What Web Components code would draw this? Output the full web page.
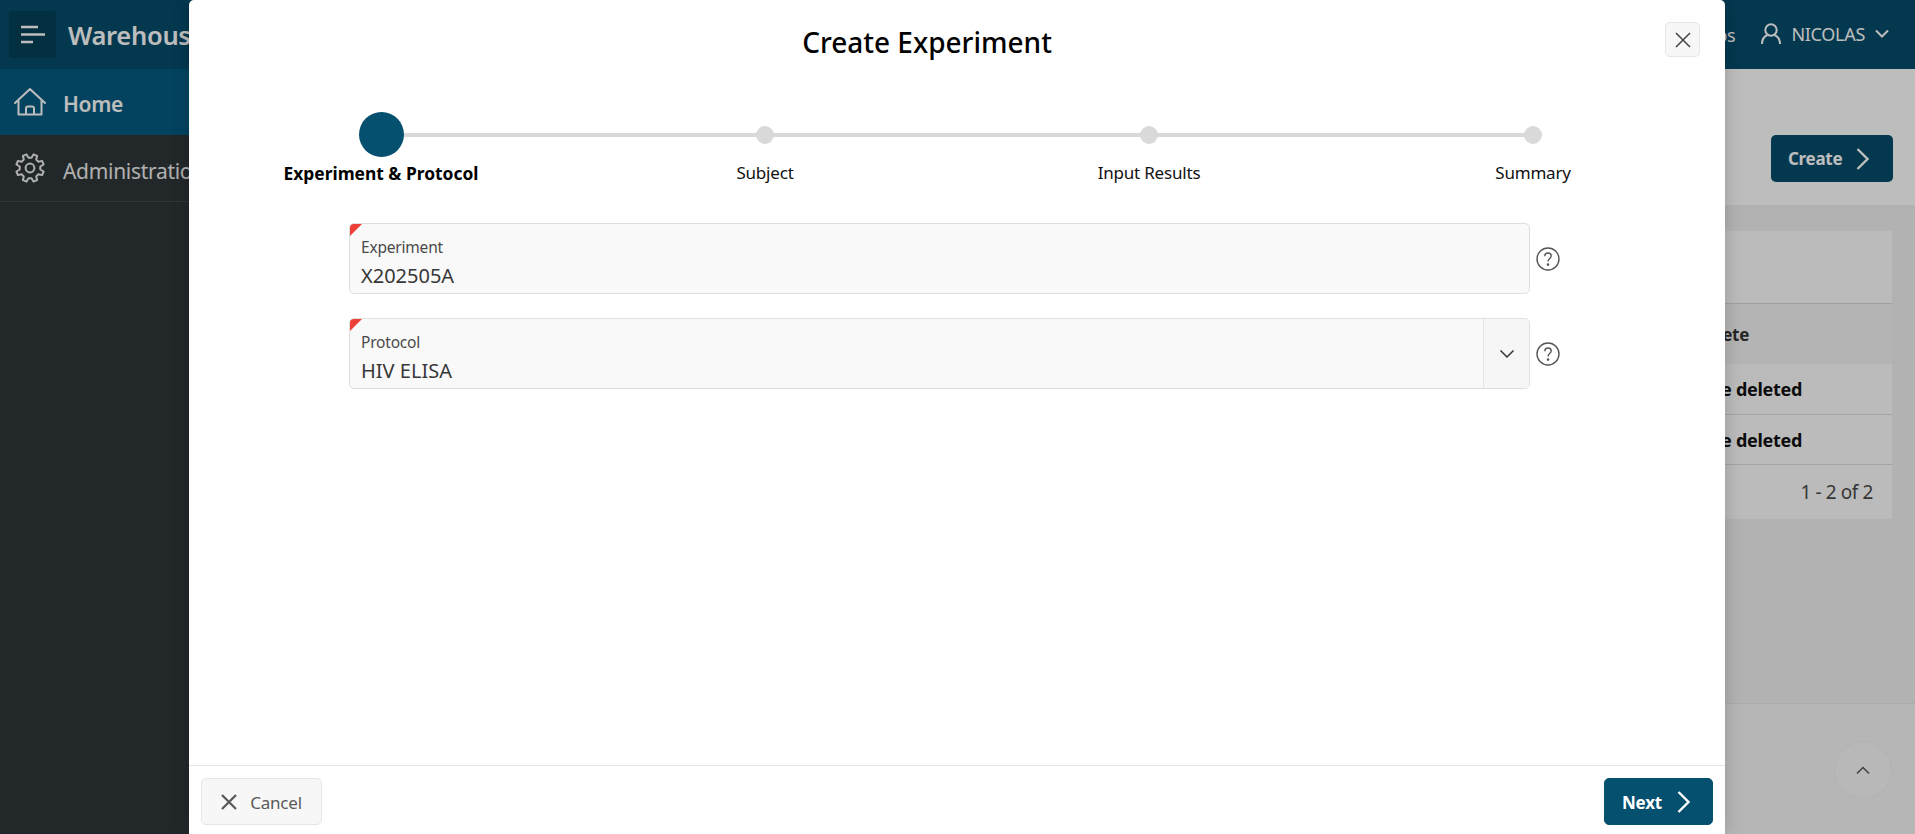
<!DOCTYPE html>
<html lang="en"><head><meta charset="utf-8"><title>Create Experiment</title>
<style>
html,body{margin:0;height:100%;overflow:hidden}
body{font-family:"Noto Sans","Open Sans",sans-serif;background:#fafafa}
</style></head><body>
<app-shell></app-shell>
<modal-scrim></modal-scrim>
<experiment-dialog></experiment-dialog>
<script>
function gearPath(){let d='';const n=8,cx=16,cy=15;const ro=14,ri=10.4;for(let i=0;i<n;i++){const a=(i/n)*Math.PI*2+Math.PI/8;const s=Math.PI/n;const pts=[[ri,a-s*.62],[ro,a-s*.36],[ro,a+s*.36],[ri,a+s*.62]];pts.forEach(([r,t],j)=>{d+=(i===0&&j===0?'M':'L')+(cx+r*Math.cos(t)).toFixed(1)+' '+(cy+r*Math.sin(t)).toFixed(1);});}return d+'Z';}
const I={
menu:'<svg width="26" height="20" viewBox="0 0 26 20" fill="none" stroke="currentColor" stroke-width="2.6"><path d="M1 2h17M1 9.500h24M1 17h12"/></svg>',
home:'<svg width="32" height="30" viewBox="0 0 32 30" fill="none" stroke="currentColor" stroke-width="2" stroke-linejoin="round" stroke-linecap="round"><path d="M1 16 16 2l15 14M4.500 13.500V27.500h23V13.500M12 27.500V21.500a2 2 0 0 1 2-2h4a2 2 0 0 1 2 2V27.500"/></svg>',
gear:'<svg width="32" height="30" viewBox="0 0 32 30" fill="none" stroke="currentColor" stroke-width="2" stroke-linejoin="round"><path d="'+gearPath()+'"/><circle cx="16" cy="15" r="4.400"/></svg>',
user:'<svg width="20" height="22" viewBox="0 0 20 22" fill="none" stroke="currentColor" stroke-width="2"><circle cx="10" cy="7" r="5.700"/><path d="M1 21c0-5 3-8 5.500-9M19 21c0-5-3-8-5.500-9"/></svg>',
down:'<svg width="14" height="9" viewBox="0 0 14 9" fill="none" stroke="currentColor" stroke-width="2"><path d="M1 1.500l6 6 6-6"/></svg>',
down2:'<svg width="16" height="10" viewBox="0 0 16 10" fill="none" stroke="currentColor" stroke-width="1.500"><path d="M1.500 1.500l6.500 6.500 6.500-6.500"/></svg>',
up:'<svg width="14" height="9" viewBox="0 0 14 9" fill="none" stroke="currentColor" stroke-width="1.500"><path d="M1 7.500l6-6 6 6"/></svg>',
right:'<svg width="13" height="22" viewBox="0 0 13 22" fill="none" stroke="currentColor" stroke-width="2.400"><path d="M1.500 1l10 10-10 10"/></svg>',
x:'<svg width="16" height="16" viewBox="0 0 16 16" fill="none" stroke="currentColor" stroke-width="1.500"><path d="M1 1l14 14M15 1L1 15"/></svg>',
xb:'<svg width="16" height="16" viewBox="0 0 16 16" fill="none" stroke="currentColor" stroke-width="2.300"><path d="M1 1l14 14M15 1L1 15"/></svg>',
help:'<svg width="24" height="24" viewBox="0 0 24 24" fill="none" stroke="currentColor" stroke-width="1.400"><circle cx="12" cy="12" r="11"/><path d="M8.800 9.200c0-2 1.400-3.200 3.200-3.200s3.200 1.200 3.200 3c0 2.600-3.200 2.600-3.200 5.400"/><circle cx="12" cy="17.600" r=".6" fill="currentColor"/></svg>'
};
function def(name,css,html){customElements.define(name,class extends HTMLElement{constructor(){super();const r=this.attachShadow({mode:'open'});r.innerHTML='<style>'+css+'</style>'+(typeof html==='function'?html(this):html);}});}

def('app-shell',`
:host{display:flex;flex-direction:column;height:834px;width:1915px;overflow:hidden;letter-spacing:-.3px}
header{flex:none;height:69px;background:#054c6b;color:#fff;display:flex;align-items:center;padding:0 26px 0 9px;box-sizing:border-box}
.burger{width:47px;height:47px;background:#044157;border-radius:4px;display:flex;align-items:center;justify-content:center;margin-right:12px}
.title{font-size:25.500px;font-weight:600}
.sp{flex:1}
.apps{font-size:18px;margin-right:26px}
.user{display:flex;align-items:center;font-size:18px;gap:10px;margin-top:-2px}
.wrap{flex:1;display:flex;min-height:0}
nav{flex:none;width:300px;background:#2e3639;color:#eee}
.item{height:66px;display:flex;align-items:center;gap:17px;padding-left:14px;font-size:21px;box-sizing:border-box;white-space:nowrap}
.item span{margin-top:5px}
.item.on span{margin-top:3px}
.item.on{background:#055b80;font-weight:600;color:#fff}
.item.b{height:67px;border-bottom:1px solid #40484b}
main{flex:1;display:flex;flex-direction:column;min-width:0}
.band{flex:none;height:136px;background:#ffffff;display:flex;justify-content:flex-end;align-items:flex-start;padding:66px 22px 0 0;box-sizing:border-box}
.create{width:122px;height:47px;background:#054c6b;color:#fff;border-radius:5px;display:flex;align-items:center;gap:14px;padding-left:17px;box-sizing:border-box;font-weight:700;font-size:17px}
.body{flex:1;background:#f1f1f1;padding:26px 23px 0 0;box-sizing:border-box;display:flex;flex-direction:column;align-items:flex-end;min-height:0}
.card{width:1000px;background:#fdfdfd;color:#111;font-weight:700;font-size:18px;flex:none}
.row{display:flex;justify-content:flex-end;align-items:center;padding-right:90px;box-sizing:border-box;border-top:1px solid #ddd}
.r0{height:72px;border-top:none}
.r1{height:61px;background:#f3f3f3;padding-right:143px;font-size:17px;color:#333;border-top:1px solid #d8d8d8}
.r2{height:50px;border-top:none}
.r3{height:50px}
.r4{height:55px;padding-right:19px;font-weight:400;font-size:19px;color:#4a4a4a;letter-spacing:-.4px}
.foot{flex:none;width:100%;height:131px;display:flex;justify-content:flex-end;padding:37px 23px 0 0;box-sizing:border-box;background:#f6f6f6;border-top:1px solid #e6e6e6}
.top{width:58px;height:58px;border-radius:50%;background:#f8f8f8;border:1px solid #f1f1f1;box-sizing:border-box;display:flex;align-items:center;justify-content:center;color:#555}
`,`<header><div class="burger">${I.menu}</div><div class="title">Warehouse</div><div class="sp"></div><div class="apps">Apps</div><div class="user">${I.user}<span>NICOLAS</span>${I.down}</div></header>
<div class="wrap"><nav><div class="item on">${I.home}<span>Home</span></div><div class="item b">${I.gear}<span>Administration</span></div></nav>
<main><div class="band"><div class="create">Create ${I.right}</div></div>
<div class="body"><div class="card"><div class="row r0"></div><div class="row r1">Complete</div><div class="row r2">To be deleted</div><div class="row r3">To be deleted</div><div class="row r4">1 - 2 of 2</div></div></div>
<div class="foot"><div class="top">${I.up}</div></div></main></div>`);

def('modal-scrim',`:host{display:block;position:absolute;inset:0;background:rgba(0,0,0,.26)}`,``);

def('wizard-step',`
:host{display:flex;flex-direction:column;align-items:center;position:relative;font-size:17px;color:#111}
.track{height:45px;display:flex;align-items:center;justify-content:center;position:relative;width:100%}
.line{position:absolute;left:50%;width:100%;top:21px;height:4px;background:#d9d9d9}
:host([last]) .line{display:none}
.dot{width:18px;height:18px;border-radius:50%;background:#d9d9d9;position:relative}
:host([active]) .dot{width:45px;height:45px;background:#054f6f}
:host([active]){font-weight:700;color:#000;font-size:17.400px}
.label{margin-top:4px;line-height:24px;letter-spacing:-.2px}
:host([active]) .label{letter-spacing:0}
`,`<div class="track"><div class="line"></div><div class="dot"></div></div><div class="label"><slot></slot></div>`);

def('form-field',`
:host{display:flex;align-items:center;gap:6px;color:#404040}
.box{flex:1;box-sizing:border-box;border:1px solid #dfdfdf;border-radius:5px;background:#f9f9f9;position:relative;display:flex;overflow:hidden;height:71px}
.box::before{content:"";position:absolute;left:0;top:0;width:12px;height:12px;background:#ec4038;clip-path:polygon(0 0,100% 0,0 100%)}
.txt{flex:1;padding:11px 11px 0;box-sizing:border-box}
.lab{font-size:15.500px;line-height:24px;letter-spacing:-.2px;color:#4a4a4a}
.val{font-size:20px;line-height:28px;margin-top:3px;color:#383838}
.dd{flex:none;width:45px;border-left:1px solid #e3e3e3;background:#f6f6f6;display:none;align-items:center;justify-content:center;color:#333}
:host([select]) .dd{display:flex}
.help{flex:none;display:flex;color:#555}
`,el=>`<div class="box"><div class="txt"><div class="lab">${el.getAttribute('label')}</div><div class="val">${el.getAttribute('value')}</div></div><div class="dd">${I.down2}</div></div><div class="help">${I.help}</div>`);

def('dialog-button',`
:host{display:inline-flex;align-items:center;justify-content:center;box-sizing:border-box;height:47px;border-radius:5px;border:1px solid #e6e6e6;background:#f7f7f7;color:#5a5a5a;font-size:17px;gap:13px;letter-spacing:-.2px}
:host([hot]){background:#054f6f;border-color:#054f6f;color:#fff;font-weight:700;gap:15px;justify-content:flex-start;padding-left:17px}
`,`<slot></slot>`);

def('experiment-dialog',`
:host{position:absolute;left:189px;top:0;width:1536px;height:834px;background:#fff;border-radius:5px 5px 0 0;display:flex;flex-direction:column;box-shadow:0 0 18px rgba(0,0,0,.18)}
.head{flex:none;height:112px;box-sizing:border-box;display:flex;align-items:flex-start}
h1{flex:1;text-align:center;margin:24px 0 0;font-size:28px;line-height:36px;font-weight:500;color:#000}
.close{flex:none;margin:22px 25px 0 0;width:35px;height:35px;box-sizing:border-box;border:1px solid #e6e6e6;border-radius:5px;background:#f7f7f7;display:flex;align-items:center;justify-content:center;color:#444}
.wiz{flex:none;display:grid;grid-template-columns:repeat(4,1fr)}
.form{flex:1;display:flex;flex-direction:column;padding:38px 165px 0 160px;gap:24px;box-sizing:border-box}
.foot{flex:none;height:69px;border-top:1px solid #e4e4e4;box-sizing:border-box;display:flex;justify-content:space-between;padding:12px 12px 0 12px}
.cancel{width:121px}.next{width:109px}
.cancel span,.next span{margin-top:2px}
`,`<div class="head"><h1>Create Experiment</h1><div class="close">${I.x}</div></div>
<div class="wiz"><wizard-step active>Experiment &amp; Protocol</wizard-step><wizard-step>Subject</wizard-step><wizard-step>Input Results</wizard-step><wizard-step last>Summary</wizard-step></div>
<div class="form"><form-field label="Experiment" value="X202505A"></form-field><form-field select label="Protocol" value="HIV ELISA"></form-field></div>
<div class="foot"><dialog-button class="cancel">${I.xb}<span>Cancel</span></dialog-button><dialog-button hot class="next"><span>Next</span>${I.right}</dialog-button></div>`);
</script>
</body></html>
